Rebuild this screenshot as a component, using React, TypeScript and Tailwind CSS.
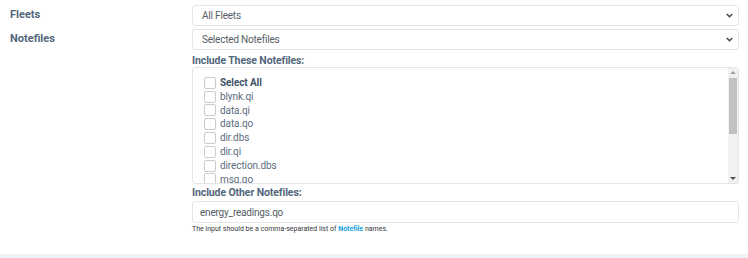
import React from "react";

const notefiles = ["blynk.qi", "data.qi", "data.qo", "dir.dbs", "dir.qi", "direction.dbs", "msq.qo"];

const Chevron = () => (
  <svg width="7" height="5" viewBox="0 0 7 5" className="shrink-0">
    <path d="M0.8 0.9 L3.5 3.8 L6.2 0.9" fill="none" stroke="#444" strokeWidth="1.4" />
  </svg>
);

const SelectBox = ({ value }: { value: string }) => (
  <div className="flex h-[21px] items-center justify-between rounded-[3px] border border-[#e2e5e9] bg-white pl-[9px] pr-[5px] text-[10px] tracking-[-0.2px] text-[#555d66]">
    <span>{value}</span>
    <Chevron />
  </div>
);

const Checkbox = () => (
  <span className="h-[12px] w-[12px] shrink-0 rounded-[2px] border border-[#c9cdd2] bg-white" />
);

export default function App() {
  return (
    <div className="h-[258px] w-[748px] overflow-hidden bg-white font-['Roboto',sans-serif]">
      <div className="flex flex-col gap-[3px] pl-[10px] pr-[9px] pt-[5px]">
        <div className="flex items-center">
          <div className="w-[182px] text-[11px] font-bold text-[#52667b]">Fleets</div>
          <div className="flex-1">
            <SelectBox value="All Fleets" />
          </div>
        </div>
        <div className="flex items-center">
          <div className="w-[182px] text-[11px] font-bold text-[#52667b]">Notefiles</div>
          <div className="flex-1">
            <SelectBox value="Selected Notefiles" />
          </div>
        </div>
        <div className="ml-[182px] flex flex-col">
          <div className="mt-[2px] text-[10.5px] font-bold leading-[12px] tracking-[-0.1px] text-[#52667b]">
            Include These Notefiles:
          </div>
          <div className="flex h-[117px] overflow-hidden rounded-[3px] border border-[#e2e5e9] bg-white">
            <div className="flex flex-1 flex-col pl-[11px] pt-[8px] text-[10px] leading-[13.8px] tracking-[-0.1px] text-[#5c6c7c]">
              <label className="flex items-center gap-[4px] font-bold text-[#3f5368]">
                <Checkbox />
                <span>Select All</span>
              </label>
              {notefiles.map((n) => (
                <label key={n} className="flex items-center gap-[4px]">
                  <Checkbox />
                  <span>{n}</span>
                </label>
              ))}
            </div>
            <div className="flex w-[10px] flex-col items-center bg-[#f1f1f1] pb-[3px] pt-[3px]">
              <span className="h-0 w-0 border-x-[3px] border-b-[3px] border-x-transparent border-b-[#a3a3a3]" />
              <span className="mt-[4px] h-[56px] w-[8px] bg-[#c1c1c1]" />
              <span className="flex-1" />
              <span className="h-0 w-0 border-x-[3px] border-t-[3px] border-x-transparent border-t-[#505050]" />
            </div>
          </div>
          <div className="mt-[3px] text-[10.5px] font-bold leading-[12px] tracking-[-0.1px] text-[#52667b]">
            Include Other Notefiles:
          </div>
          <div className="mt-[2px] flex h-[22px] items-center rounded-[3px] border border-[#e2e5e9] bg-white pl-[7px] text-[10px] tracking-[-0.2px] text-[#555d66]">
            energy_readings.qo
          </div>
          <div className="mt-[1px] text-[7px] leading-[10px] text-[#333a42]">
            The input should be a comma-separated list of{" "}
            <span className="font-bold text-[#1aa3e0]">Notefile</span> names.
          </div>
        </div>
      </div>
      <div className="mt-[20px] h-[10px] bg-[#eef2f7]" />
    </div>
  );
}
